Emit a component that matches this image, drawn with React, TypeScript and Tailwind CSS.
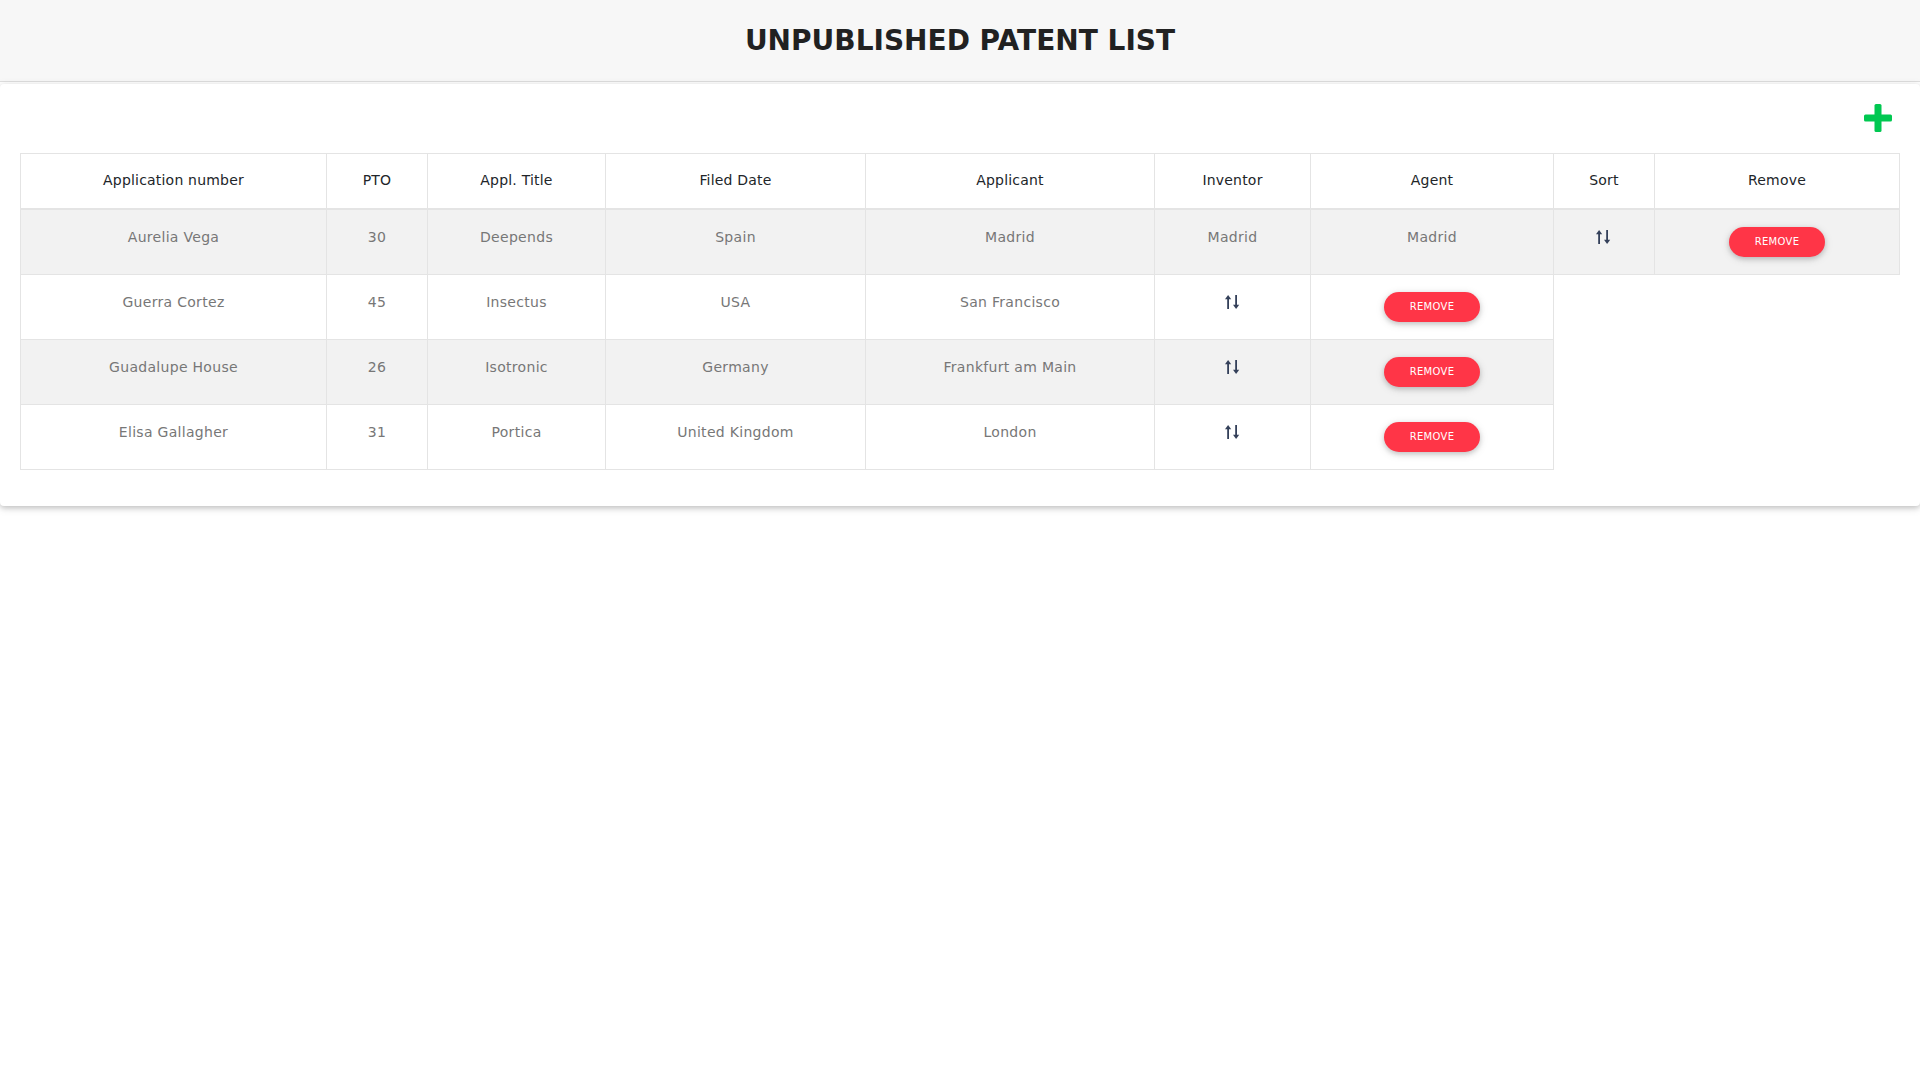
import React from "react";

type Patent = {
  number: string;
  pto: string;
  title: string;
  filed: string;
  applicant: string;
  inventor?: string;
  agent?: string;
};

const patents: Patent[] = [
  {
    number: "Aurelia Vega",
    pto: "30",
    title: "Deepends",
    filed: "Spain",
    applicant: "Madrid",
    inventor: "Madrid",
    agent: "Madrid",
  },
  { number: "Guerra Cortez", pto: "45", title: "Insectus", filed: "USA", applicant: "San Francisco" },
  { number: "Guadalupe House", pto: "26", title: "Isotronic", filed: "Germany", applicant: "Frankfurt am Main" },
  { number: "Elisa Gallagher", pto: "31", title: "Portica", filed: "United Kingdom", applicant: "London" },
];

const headers = [
  "Application number",
  "PTO",
  "Appl. Title",
  "Filed Date",
  "Applicant",
  "Inventor",
  "Agent",
  "Sort",
  "Remove",
];

const widths = [306, 101, 178, 260, 289, 156, 243, 101, 245];

const SortIcon = () => (
  <svg width="20" height="16" viewBox="0 0 20 16" className="inline-block align-top mt-[3px]">
    <g fill="#34405a">
      <rect x="4.2" y="4" width="1.8" height="11" />
      <path d="M5.1 1 L8.2 5.2 L2 5.2 Z" />
      <rect x="12.2" y="1" width="1.8" height="11" />
      <path d="M13.1 15 L16.2 10.8 L10 10.8 Z" />
    </g>
  </svg>
);

const PlusIcon = () => (
  <svg width="28" height="28" viewBox="0 0 28 28">
    <g fill="#00c851">
      <rect x="10.5" y="0" width="7" height="28" rx="1.5" />
      <rect x="0" y="10.5" width="28" height="7" rx="1.5" />
    </g>
  </svg>
);

const RemoveButton = () => (
  <button className="inline-block h-[30px] my-px px-[26px] rounded-full bg-[#ff3547] text-white text-[10px] leading-[30px] uppercase shadow-[0_2px_5px_0_rgba(0,0,0,0.16),0_2px_10px_0_rgba(0,0,0,0.12)]">
    Remove
  </button>
);

const cell = "border border-[#e4e4e4] px-2 align-top text-center text-[14px] leading-[21px] tracking-[0.3px] text-[#777777]";
const td = cell + " pt-[17px] pb-[15px]";
const tdBtn = cell + " py-4";

export default function App() {
  return (
    <div className="min-h-screen bg-white font-['DejaVu_Sans',sans-serif]">
      <header className="h-[82px] bg-[#f7f7f7] border-b border-[#dedede] flex items-center justify-center">
        <h1 className="text-[28px] font-bold text-[#212121] uppercase">
          Unpublished patent list
        </h1>
      </header>

      <section className="mt-[2px] rounded-[4px] bg-white px-5 pb-[36px] shadow-[0_2px_5px_0_rgba(0,0,0,0.16),0_2px_10px_0_rgba(0,0,0,0.12)]">
        <div className="flex justify-end pt-[20px] pr-[8px] pb-[21px]">
          <PlusIcon />
        </div>

        <table className="w-full table-fixed border-collapse">
          <colgroup>
            {widths.map((w, i) => (
              <col key={i} style={{ width: w }} />
            ))}
          </colgroup>
          <thead>
            <tr>
              {headers.map((h) => (
                <th
                  key={h}
                  className="border border-b-2 border-[#e4e4e4] px-2 pt-4 pb-[17px] text-center text-[14px] leading-[21px] tracking-[0.2px] font-normal text-[#212529]"
                >
                  {h}
                </th>
              ))}
            </tr>
          </thead>
          <tbody>
            {patents.map((p, i) => (
              <tr key={p.number} className={i % 2 === 0 ? "bg-[#f2f2f2]" : "bg-white"}>
                <td className={td}>{p.number}</td>
                <td className={td}>{p.pto}</td>
                <td className={td}>{p.title}</td>
                <td className={td}>{p.filed}</td>
                <td className={td}>{p.applicant}</td>
                {p.inventor && <td className={td}>{p.inventor}</td>}
                {p.agent && <td className={td}>{p.agent}</td>}
                <td className={tdBtn}>
                  <SortIcon />
                </td>
                <td className={tdBtn}>
                  <RemoveButton />
                </td>
              </tr>
            ))}
          </tbody>
        </table>
      </section>
    </div>
  );
}
